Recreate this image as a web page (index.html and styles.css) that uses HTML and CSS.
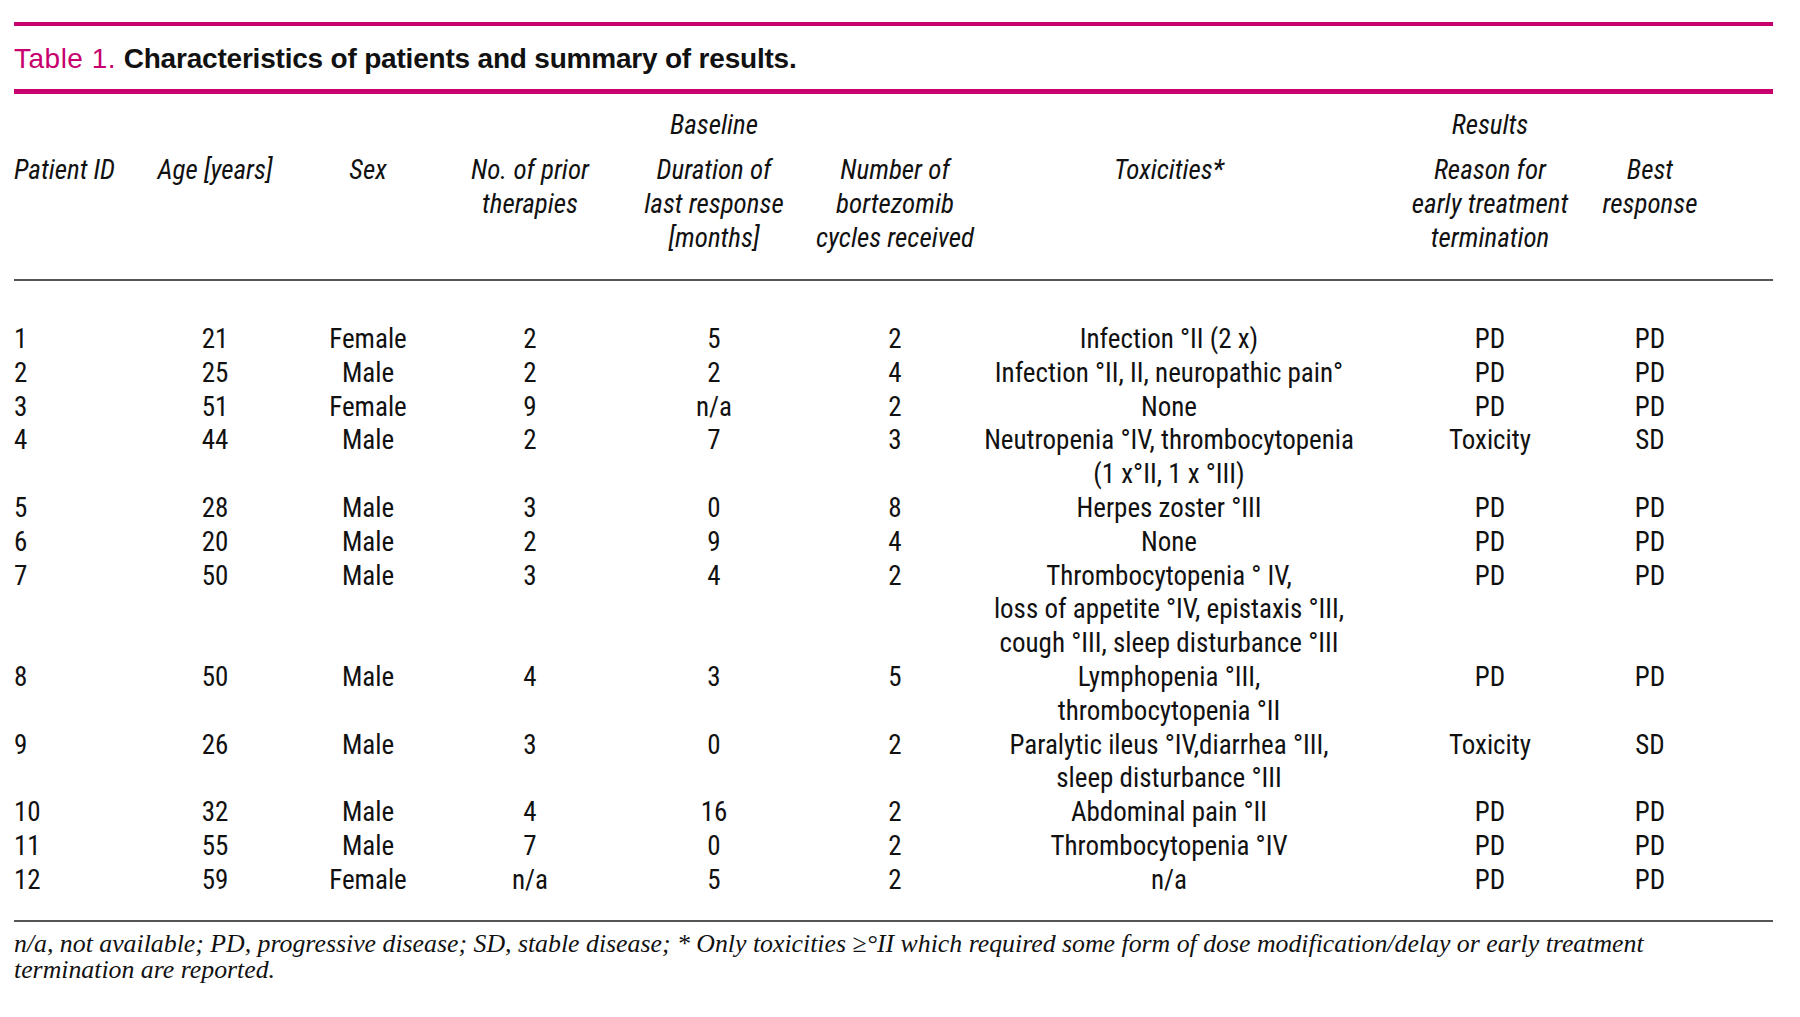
FILE: index.html
```html
<!DOCTYPE html>
<html lang="en">
<head>
<meta charset="utf-8">
<title>Table 1. Characteristics of patients and summary of results.</title>
<link rel="stylesheet" href="styles.css">
</head>
<body>
<div class="page">
  <div class="rule rule-top"></div>
  <h1 class="title"><span class="label">Table 1.</span> Characteristics of patients and summary of results.</h1>
  <div class="rule rule-bottom"></div>

  <table class="data">
    <colgroup>
      <col class="c1"><col class="c2"><col class="c3"><col class="c4"><col class="c5"><col class="c6"><col class="c7"><col class="c8"><col class="c9">
    </colgroup>
    <thead>
      <tr class="group">
        <th></th><th></th><th></th><th></th>
        <th>Baseline</th>
        <th></th><th></th>
        <th class="reason">Results</th>
        <th class="best"></th>
      </tr>
      <tr class="heads">
        <th class="left">Patient ID</th>
        <th>Age [years]</th>
        <th>Sex</th>
        <th>No. of prior<br>therapies</th>
        <th>Duration of<br>last response<br>[months]</th>
        <th>Number of<br>bortezomib<br>cycles received</th>
        <th>Toxicities*</th>
        <th class="reason">Reason for<br>early treatment<br>termination</th>
        <th class="best">Best<br>response</th>
      </tr>
    </thead>
    <tbody>
      <tr class="first"><td class="left">1</td><td>21</td><td>Female</td><td>2</td><td>5</td><td>2</td><td>Infection °II (2 x)</td><td class="reason">PD</td><td class="best">PD</td></tr>
      <tr><td class="left">2</td><td>25</td><td>Male</td><td>2</td><td>2</td><td>4</td><td>Infection °II, II, neuropathic pain°</td><td class="reason">PD</td><td class="best">PD</td></tr>
      <tr><td class="left">3</td><td>51</td><td>Female</td><td>9</td><td>n/a</td><td>2</td><td>None</td><td class="reason">PD</td><td class="best">PD</td></tr>
      <tr><td class="left">4</td><td>44</td><td>Male</td><td>2</td><td>7</td><td>3</td><td>Neutropenia °IV, thrombocytopenia<br>(1 x°II, 1 x °III)</td><td class="reason">Toxicity</td><td class="best">SD</td></tr>
      <tr><td class="left">5</td><td>28</td><td>Male</td><td>3</td><td>0</td><td>8</td><td>Herpes zoster °III</td><td class="reason">PD</td><td class="best">PD</td></tr>
      <tr><td class="left">6</td><td>20</td><td>Male</td><td>2</td><td>9</td><td>4</td><td>None</td><td class="reason">PD</td><td class="best">PD</td></tr>
      <tr><td class="left">7</td><td>50</td><td>Male</td><td>3</td><td>4</td><td>2</td><td>Thrombocytopenia ° IV,<br>loss of appetite °IV, epistaxis °III,<br>cough °III, sleep disturbance °III</td><td class="reason">PD</td><td class="best">PD</td></tr>
      <tr><td class="left">8</td><td>50</td><td>Male</td><td>4</td><td>3</td><td>5</td><td>Lymphopenia °III,<br>thrombocytopenia °II</td><td class="reason">PD</td><td class="best">PD</td></tr>
      <tr><td class="left">9</td><td>26</td><td>Male</td><td>3</td><td>0</td><td>2</td><td>Paralytic ileus °IV,diarrhea °III,<br>sleep disturbance °III</td><td class="reason">Toxicity</td><td class="best">SD</td></tr>
      <tr><td class="left">10</td><td>32</td><td>Male</td><td>4</td><td>16</td><td>2</td><td>Abdominal pain °II</td><td class="reason">PD</td><td class="best">PD</td></tr>
      <tr><td class="left">11</td><td>55</td><td>Male</td><td>7</td><td>0</td><td>2</td><td>Thrombocytopenia °IV</td><td class="reason">PD</td><td class="best">PD</td></tr>
      <tr class="last"><td class="left">12</td><td>59</td><td>Female</td><td>n/a</td><td>5</td><td>2</td><td>n/a</td><td class="reason">PD</td><td class="best">PD</td></tr>
    </tbody>
  </table>

  <p class="note">n/a, not available; PD, progressive disease; SD, stable disease; * Only toxicities ≥°II which required some form of dose modification/delay or early treatment<br>termination are reported.</p>
</div>
</body>
</html>
```

FILE: styles.css
```css
html, body {
  margin: 0;
  padding: 0;
  background: #ffffff;
}

.page {
  width: 1759px;
  padding: 22px 0 0 14px;
  color: #111111;
}

.rule {
  background: #c7006e;
}

.rule-top {
  height: 4px;
}

.rule-bottom {
  height: 5px;
  margin-top: 15px;
}

.title {
  margin: 17px 0 0 0;
  font-family: "Liberation Sans", Arial, sans-serif;
  font-size: 28px;
  font-weight: 700;
  line-height: 32px;
  letter-spacing: -0.2px;
  color: #111111;
}

.title .label {
  color: #c7006e;
  font-weight: 400;
  letter-spacing: 0.5px;
}

.title + .rule-bottom {
  margin-top: 14px;
}

.data {
  width: 1759px;
  table-layout: fixed;
  border-collapse: collapse;
  font-family: "Roboto", sans-serif;
  font-stretch: 75%;
  font-size: 27px;
  line-height: 34px;
  color: #111111;
}

.c1 { width: 120px; }
.c2 { width: 162px; }
.c3 { width: 144px; }
.c4 { width: 180px; }
.c5 { width: 188px; }
.c6 { width: 174px; }
.c7 { width: 374px; }
.c8 { width: 234px; }
.c9 { width: 183px; }

.data th,
.data td {
  padding: 0;
  text-align: center;
  vertical-align: top;
  white-space: nowrap;
}

.data th {
  font-style: italic;
  font-weight: 400;
}

.data td {
  line-height: 33.8px;
}

.data .left {
  text-align: left;
}

.data .reason {
  padding-left: 34px;
}

.data .best {
  padding-right: 63px;
}

.group th {
  padding-top: 14px;
  padding-bottom: 11px;
}

.heads th {
  padding-bottom: 24px;
  border-bottom: 2px solid #555555;
}

.first td {
  padding-top: 42px;
}

.last td {
  padding-bottom: 22px;
  border-bottom: 2px solid #555555;
}

.note {
  margin: 9px 0 0 0;
  font-family: "Liberation Serif", "Times New Roman", serif;
  font-style: italic;
  font-size: 25.8px;
  line-height: 26.5px;
  color: #111111;
}
```
